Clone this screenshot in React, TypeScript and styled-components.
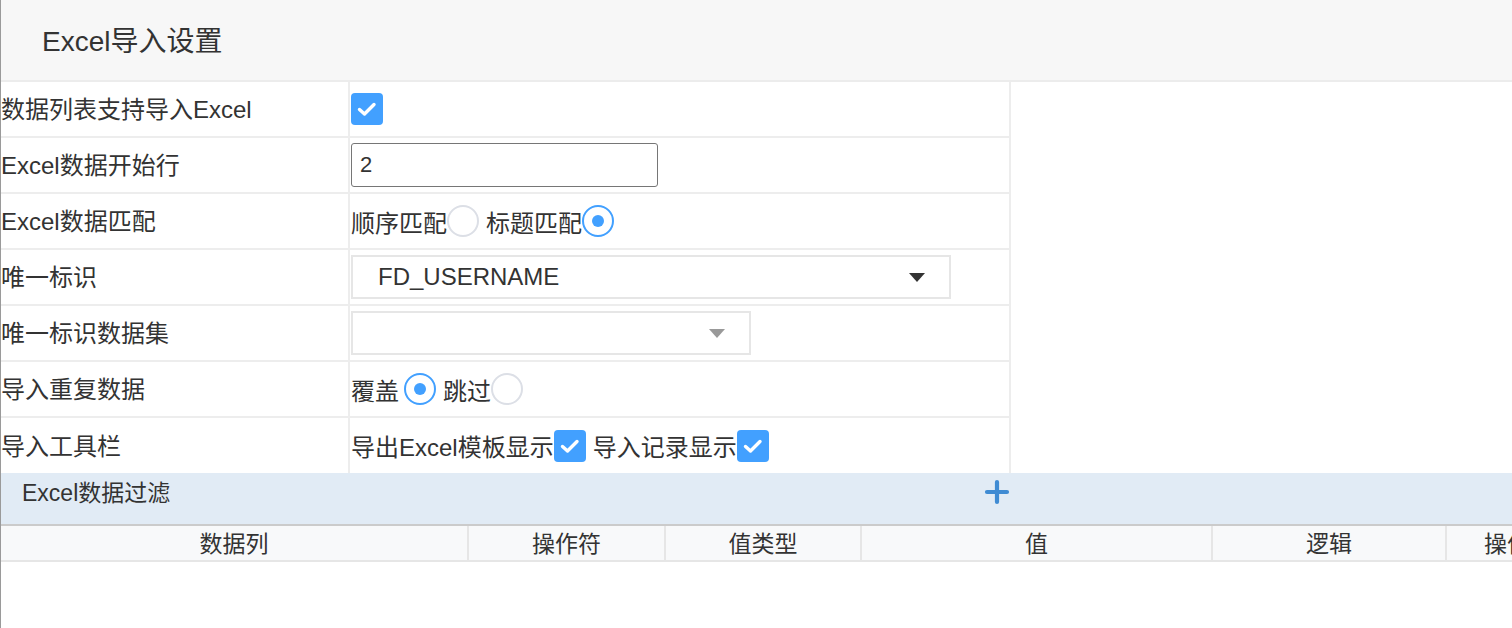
import React from 'react'
import styled, { createGlobalStyle } from 'styled-components'

const GlobalStyle = createGlobalStyle`
  html, body {
    margin: 0;
    padding: 0;
    background: #fff;
  }
  body {
    font-family: "Liberation Sans", "Noto Sans CJK SC", sans-serif;
    color: #333;
    overflow: hidden;
  }
`

const Page = styled.div`
  width: 1512px;
  height: 628px;
  box-sizing: border-box;
  border-left: 1px solid #9a9a9a;
  overflow: hidden;
`

const TopBar = styled.div`
  height: 82px;
  box-sizing: border-box;
  background: #f7f7f7;
  border-bottom: 2px solid #ececec;
  display: flex;
  align-items: center;
  padding: 0 0 2px 41px;
  font-size: 28px;
  color: #333;
`

const Form = styled.div`
  width: 1010px;
  display: flex;
  flex-direction: column;
`

const Row = styled.div`
  height: 54px;
  display: flex;
  border-bottom: 2px solid #ededed;
  &:last-child {
    border-bottom: none;
    height: 55px;
  }
`

const Label = styled.div`
  width: 347px;
  padding: 0 0 3px 0;
  border-right: 2px solid #ededed;
  display: flex;
  align-items: center;
  font-size: 24px;
  color: #333;
`

const Value = styled.div`
  flex: 1;
  border-right: 2px solid #ededed;
  display: flex;
  align-items: center;
  padding-left: 1px;
  font-size: 24px;
  color: #333;
  white-space: pre;
`

const Check = styled.span`
  width: 32px;
  height: 32px;
  border-radius: 4px;
  background: #42a0ff;
  display: inline-flex;
  align-items: center;
  justify-content: center;
  flex: none;
`

const Radio = styled.span<{ $on?: boolean }>`
  width: 32px;
  height: 32px;
  box-sizing: border-box;
  border-radius: 50%;
  border: 2px solid ${p => (p.$on ? '#42a0ff' : '#dcdfe6')};
  display: inline-flex;
  align-items: center;
  justify-content: center;
  flex: none;
  &::after {
    content: '';
    width: 12px;
    height: 12px;
    border-radius: 50%;
    background: #42a0ff;
    display: ${p => (p.$on ? 'block' : 'none')};
  }
`

const Gap = styled.span<{ $w: number }>`
  display: inline-block;
  width: ${p => p.$w}px;
`

const TextInput = styled.input`
  width: 307px;
  height: 44px;
  box-sizing: border-box;
  border: 1.5px solid #767676;
  border-radius: 3px;
  padding: 0 8px;
  font-family: "Liberation Sans", "Noto Sans CJK SC", sans-serif;
  font-size: 22px;
  color: #333;
  outline: none;
`

const Select = styled.div<{ $w: number }>`
  width: ${p => p.$w}px;
  height: 44px;
  box-sizing: border-box;
  border: 2px solid #e6e6e6;
  display: flex;
  align-items: center;
  padding: 0 24px 0 25px;
  font-size: 24px;
  color: #333;
`

const SelectText = styled.span`
  flex: 1;
`

const Caret = styled.span<{ $c: string }>`
  width: 0;
  height: 0;
  border-left: 8px solid transparent;
  border-right: 8px solid transparent;
  border-top: 9px solid ${p => p.$c};
`

const FilterBar = styled.div`
  height: 51px;
  background: #e1ebf5;
  border-bottom: 2px solid #cbcbcb;
  display: flex;
  align-items: flex-start;
  font-size: 23px;
  color: #333;
`

const FilterTitle = styled.span`
  width: 983px;
  padding: 1px 0 0 21px;
  box-sizing: border-box;
`

const AddBtn = styled.span`
  padding-top: 6px;
  display: inline-flex;
`

const GridHead = styled.div`
  display: flex;
  height: 34px;
  width: 1600px;
  background: #f8f9fa;
  border-bottom: 2px solid #e6e6e6;
`

const HeadCell = styled.div<{ $w: number }>`
  width: ${p => p.$w}px;
  flex: none;
  box-sizing: border-box;
  border-right: 2px solid #e6e6e6;
  display: flex;
  align-items: center;
  justify-content: center;
  padding-bottom: 2px;
  font-size: 23px;
  color: #333;
`

const Tick = () => (
  <Check>
    <svg width="24" height="24" viewBox="0 0 24 24">
      <path d="M4.5 12.5 L9.5 17 L19 7.5" fill="none" stroke="#fff" strokeWidth="3.4" strokeLinecap="round" strokeLinejoin="round" />
    </svg>
  </Check>
)

const heads = [
  { t: '数据列', w: 468 },
  { t: '操作符', w: 197 },
  { t: '值类型', w: 196 },
  { t: '值', w: 351 },
  { t: '逻辑', w: 234 },
  { t: '操作', w: 122 },
]

export default function App() {
  return (
    <Page>
      <GlobalStyle />
      <TopBar>Excel导入设置</TopBar>
      <Form>
        <Row>
          <Label>数据列表支持导入Excel</Label>
          <Value><Tick /></Value>
        </Row>
        <Row>
          <Label>Excel数据开始行</Label>
          <Value><TextInput defaultValue="2" /></Value>
        </Row>
        <Row>
          <Label>Excel数据匹配</Label>
          <Value>
            顺序匹配<Radio /><Gap $w={7} />标题匹配<Radio $on />
          </Value>
        </Row>
        <Row>
          <Label>唯一标识</Label>
          <Value>
            <Select $w={600}>
              <SelectText>FD_USERNAME</SelectText>
              <Caret $c="#333" />
            </Select>
          </Value>
        </Row>
        <Row>
          <Label>唯一标识数据集</Label>
          <Value>
            <Select $w={400}>
              <SelectText />
              <Caret $c="#999" />
            </Select>
          </Value>
        </Row>
        <Row>
          <Label>导入重复数据</Label>
          <Value>
            覆盖<Gap $w={5} /><Radio $on /><Gap $w={7} />跳过<Radio />
          </Value>
        </Row>
        <Row>
          <Label>导入工具栏</Label>
          <Value>
            导出Excel模板显示<Tick /><Gap $w={7} />导入记录显示<Tick />
          </Value>
        </Row>
      </Form>
      <FilterBar>
        <FilterTitle>Excel数据过滤</FilterTitle>
        <AddBtn>
          <svg width="26" height="26" viewBox="0 0 26 26">
            <path d="M13 3 V23 M3 13 H23" stroke="#3f8bd3" strokeWidth="4.2" strokeLinecap="round" />
          </svg>
        </AddBtn>
      </FilterBar>
      <GridHead>
        {heads.map(h => (
          <HeadCell key={h.t} $w={h.w}>{h.t}</HeadCell>
        ))}
      </GridHead>
    </Page>
  )
}
